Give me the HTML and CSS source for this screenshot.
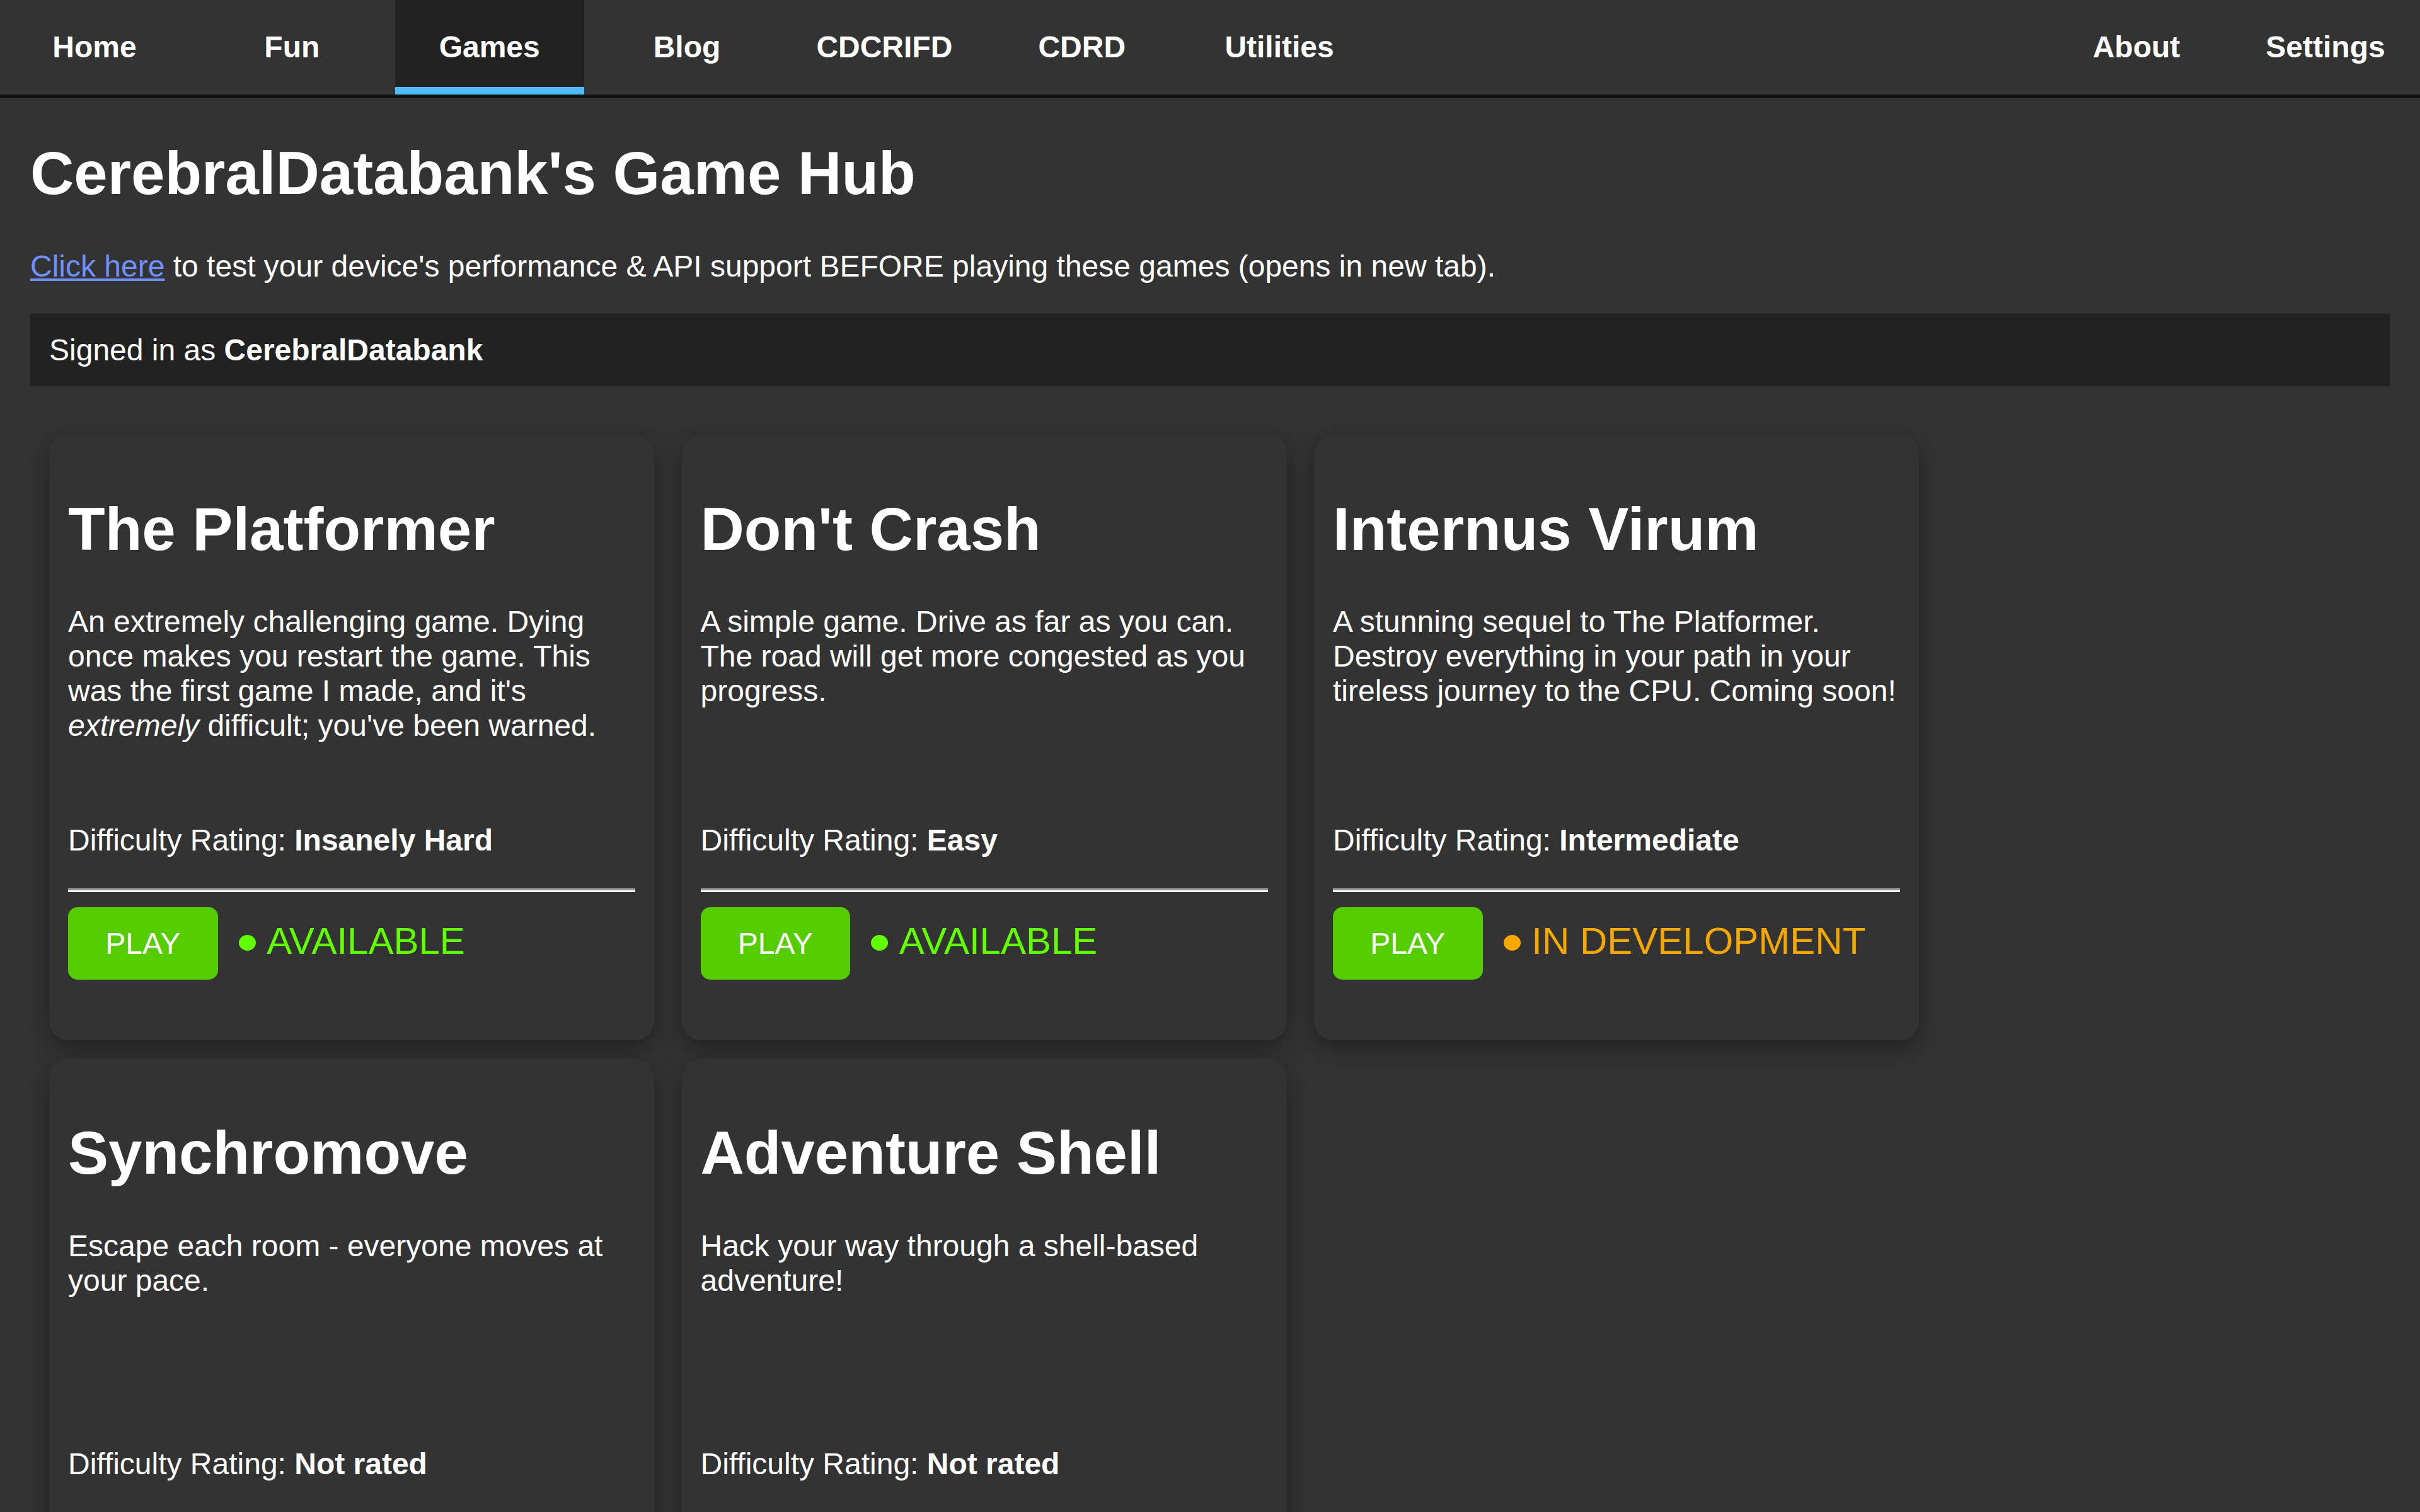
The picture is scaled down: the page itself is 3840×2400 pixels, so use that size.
FILE: index.html
```html
<!DOCTYPE html>
<html lang="en">
<head>
<meta charset="utf-8">
<title>CerebralDatabank's Game Hub</title>
<link rel="stylesheet" href="styles.css">
</head>
<body>
<nav class="topnav">
  <ul class="nav-left">
    <li><a class="nav-link" href="#">Home</a></li>
    <li><a class="nav-link" href="#">Fun</a></li>
    <li><a class="nav-link active" href="#">Games</a></li>
    <li><a class="nav-link" href="#">Blog</a></li>
    <li><a class="nav-link" href="#">CDCRIFD</a></li>
    <li><a class="nav-link" href="#">CDRD</a></li>
    <li><a class="nav-link" href="#">Utilities</a></li>
  </ul>
  <ul class="nav-right">
    <li><a class="nav-link" href="#">About</a></li>
    <li><a class="nav-link" href="#">Settings</a></li>
  </ul>
</nav>
<main class="content">
  <h1 class="page-title">CerebralDatabank's Game Hub</h1>
  <p class="intro"><a class="link" href="#">Click here</a> to test your device's performance &amp; API support BEFORE playing these games (opens in new tab).</p>
  <div class="signed">Signed in as <b>CerebralDatabank</b></div>
  <div class="cards">
    <div class="card">
      <h2 class="card-title">The Platformer</h2>
      <p class="card-desc">An extremely challenging game. Dying once makes you restart the game. This was the first game I made, and it's <i>extremely</i> difficult; you've been warned.</p>
      <p class="rating">Difficulty Rating: <b>Insanely Hard</b></p>
      <hr class="divider">
      <div class="actions">
        <button class="play">PLAY</button>
        <span class="status ok"><span class="dot"></span>AVAILABLE</span>
      </div>
    </div>
    <div class="card">
      <h2 class="card-title">Don't Crash</h2>
      <p class="card-desc">A simple game. Drive as far as you can. The road will get more congested as you progress.</p>
      <p class="rating">Difficulty Rating: <b>Easy</b></p>
      <hr class="divider">
      <div class="actions">
        <button class="play">PLAY</button>
        <span class="status ok"><span class="dot"></span>AVAILABLE</span>
      </div>
    </div>
    <div class="card">
      <h2 class="card-title">Internus Virum</h2>
      <p class="card-desc">A stunning sequel to The Platformer. Destroy everything in your path in your tireless journey to the CPU. Coming soon!</p>
      <p class="rating">Difficulty Rating: <b>Intermediate</b></p>
      <hr class="divider">
      <div class="actions">
        <button class="play">PLAY</button>
        <span class="status dev"><span class="dot"></span>IN DEVELOPMENT</span>
      </div>
    </div>
    <div class="card">
      <h2 class="card-title">Synchromove</h2>
      <p class="card-desc">Escape each room - everyone moves at your pace.</p>
      <p class="rating">Difficulty Rating: <b>Not rated</b></p>
      <hr class="divider">
      <div class="actions">
        <button class="play">PLAY</button>
        <span class="status dev"><span class="dot"></span>IN DEVELOPMENT</span>
      </div>
    </div>
    <div class="card">
      <h2 class="card-title">Adventure Shell</h2>
      <p class="card-desc">Hack your way through a shell-based adventure!</p>
      <p class="rating">Difficulty Rating: <b>Not rated</b></p>
      <hr class="divider">
      <div class="actions">
        <button class="play">PLAY</button>
        <span class="status dev"><span class="dot"></span>IN DEVELOPMENT</span>
      </div>
    </div>
  </div>
</main>
</body>
</html>
```

FILE: styles.css
```css
html {
  scrollbar-width: none;
}
html::-webkit-scrollbar {
  display: none;
}
body {
  margin: 0;
  background: #333333;
  color: #ffffff;
  font-family: "Liberation Sans", Arial, sans-serif;
  font-size: 48px;
}

.topnav {
  display: flex;
  justify-content: space-between;
  height: 150px;
  background: #333333;
  border-bottom: 6px solid #111111;
}
.nav-left,
.nav-right {
  display: flex;
  list-style: none;
  margin: 0;
  padding: 0;
}
.nav-left {
  gap: 13.35px;
}
.nav-link {
  display: block;
  width: 300px;
  height: 150px;
  line-height: 150px;
  text-align: center;
  color: #ffffff;
  font-weight: bold;
  text-decoration: none;
}
.nav-link.active {
  background: #222222;
  box-shadow: inset 0 -12px 0 #4dbdff;
}

.content {
  padding: 0 48px;
}
.page-title {
  font-size: 96px;
  margin: 64.32px 0;
}
.intro {
  margin: 48px 0;
}
.link {
  color: #7090ff;
  text-decoration: underline;
}
.signed {
  background: #222222;
  padding: 30px;
}

.cards {
  display: flex;
  flex-wrap: wrap;
  column-gap: 43.5px;
  row-gap: 30.5px;
  padding: 78px 30px 0;
}
.card {
  box-sizing: border-box;
  width: 960px;
  height: 960px;
  padding: 30px;
  border-radius: 30px;
  background: #333333;
  box-shadow: 0 12px 36px rgba(0, 0, 0, 0.35);
  display: flex;
  flex-direction: column;
}
.card-title {
  font-size: 96px;
  margin: 64.32px 0;
}
.card-desc {
  margin: 0;
}
.rating {
  margin: auto 0 49.4px;
}
.divider {
  width: 100%;
  height: 0;
  margin: 0 0 24px;
  border: 0;
  border-top: 3px solid #9a9a9a;
  border-bottom: 3px solid #eeeeee;
}
.actions {
  display: flex;
  align-items: baseline;
  margin-bottom: 65.2px;
}
.play {
  background: #55cc00;
  color: #ffffff;
  border: none;
  border-radius: 15px;
  font-family: "Liberation Sans", Arial, sans-serif;
  font-size: 48px;
  line-height: 55.2px;
  padding: 30px 59.2px;
}
.status {
  font-size: 60px;
  margin-left: 33px;
}
.status.ok {
  color: #62ff00;
}
.status.dev {
  color: #f5a800;
}
.dot {
  display: inline-block;
  width: 27px;
  height: 25px;
  border-radius: 50%;
  background: currentColor;
  margin-right: 17.7px;
  vertical-align: 5px;
}
```
